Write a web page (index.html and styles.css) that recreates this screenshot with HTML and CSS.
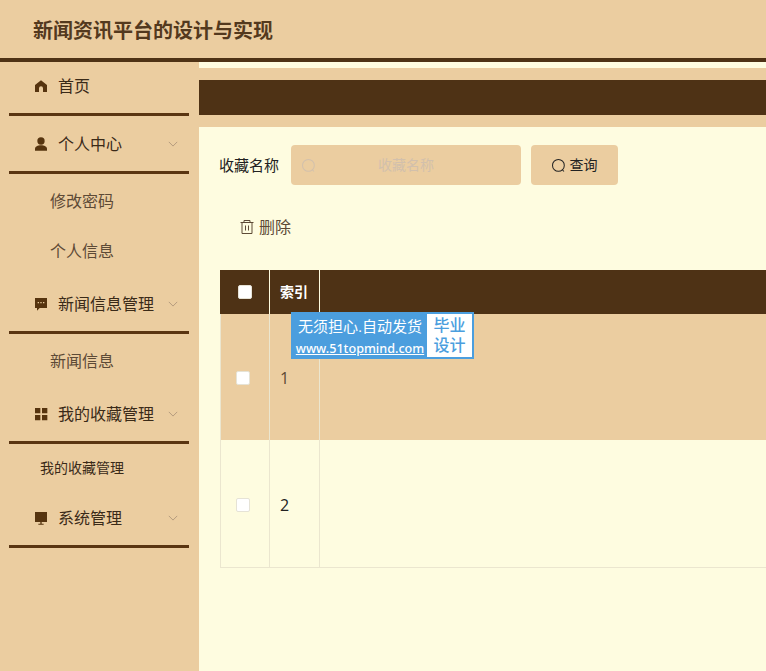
FILE: index.html
```html
<!DOCTYPE html>
<html lang="zh-CN">
<head>
    <meta charset="UTF-8">
    <meta name="viewport" content="width=device-width, initial-scale=1.0">
    <title>新闻资讯平台的设计与实现</title>
    <link rel="stylesheet" href="styles.css">
</head>
<body>
    <header class="topbar">
        <h1>新闻资讯平台的设计与实现</h1>
    </header>
    <div class="layout">
        <aside class="sidebar">
            <div class="menu-title home">
                <svg class="menu-icon" viewBox="0 0 24 24"><path d="M12 3.5 3 10.5V21h6v-5.5a3 3 0 0 1 6 0V21h6V10.5z"/></svg>
                <span>首页</span>
            </div>
            <div class="menu-title">
                <svg class="menu-icon" viewBox="0 0 24 24"><circle cx="12" cy="7.5" r="5.5"/><path d="M3 22v-2.5c0-3.5 4-5.5 9-5.5s9 2 9 5.5V22z"/></svg>
                <span>个人中心</span>
                <svg class="arrow" viewBox="0 0 12 12"><path d="M1 3.5 6 8.5 11 3.5"/></svg>
            </div>
            <div class="menu-item">修改密码</div>
            <div class="menu-item">个人信息</div>
            <div class="menu-title">
                <svg class="menu-icon" viewBox="0 0 24 24"><path d="M3 3h18v15H10l-4 4v-4H3z"/><path class="dots" d="M7 9h2v2H7zM11 9h2v2h-2zM15 9h2v2h-2z"/></svg>
                <span>新闻信息管理</span>
                <svg class="arrow" viewBox="0 0 12 12"><path d="M1 3.5 6 8.5 11 3.5"/></svg>
            </div>
            <div class="menu-item">新闻信息</div>
            <div class="menu-title">
                <svg class="menu-icon" viewBox="0 0 24 24"><path d="M3 3h8v8H3zM13.5 3h8v8h-8zM3 13.5h8v8H3zM13.5 13.5h8v8h-8z"/></svg>
                <span>我的收藏管理</span>
                <svg class="arrow" viewBox="0 0 12 12"><path d="M1 3.5 6 8.5 11 3.5"/></svg>
            </div>
            <div class="menu-item small">我的收藏管理</div>
            <div class="menu-title">
                <svg class="menu-icon" viewBox="0 0 24 24"><path d="M3 3h18v15H3zM8 20.5h8V22H8zM11 18h2v3h-2z"/></svg>
                <span>系统管理</span>
                <svg class="arrow" viewBox="0 0 12 12"><path d="M1 3.5 6 8.5 11 3.5"/></svg>
            </div>
        </aside>
        <main class="content">
            <div class="strip"></div>
            <div class="crumb-bar"></div>
            <section class="panel">
                <div class="search-row">
                    <label>收藏名称</label>
                    <div class="search-input">
                        <svg class="search-icon" viewBox="1.2 1.2 12.8 12.8"><circle cx="7.5" cy="7.5" r="5.8"/><path d="M11.5 12 13 13.5"/></svg>
                        <span>收藏名称</span>
                    </div>
                    <button class="search-btn">
                        <svg class="search-icon" viewBox="1.2 1.2 12.8 12.8"><circle cx="7.5" cy="7.5" r="5.8"/><path d="M11.5 12 13 13.5"/></svg>
                        <span>查询</span>
                    </button>
                </div>
                <div class="actions">
                    <svg class="trash" viewBox="1 1 14 14"><path d="M1.5 3.5h13M5 3.5V1.5h6v2M3 3.5v11h10v-11M6.5 6.5v5M9.5 6.5v5"/></svg>
                    <span>删除</span>
                </div>
                <div class="table">
                    <div class="row head">
                        <div class="cell check"><i class="box"></i></div>
                        <div class="cell index">索引</div>
                        <div class="cell fill"></div>
                    </div>
                    <div class="row odd">
                        <div class="cell check"><i class="box"></i></div>
                        <div class="cell index">1</div>
                        <div class="cell fill"></div>
                    </div>
                    <div class="row even">
                        <div class="cell check"><i class="box"></i></div>
                        <div class="cell index">2</div>
                        <div class="cell fill"></div>
                    </div>
                </div>
                <div class="watermark">
                    <div class="wm-text">
                        <div>无须担心.自动发货</div>
                        <a>www.51topmind.com</a>
                    </div>
                    <div class="wm-tag">毕业<br>设计</div>
                </div>
            </section>
        </main>
    </div>
</body>
</html>
```

FILE: styles.css
```css
html, body {
    margin: 0;
    height: 100%;
    overflow: hidden;
}
body {
    font-family: "Noto Sans CJK SC", "Noto Sans", sans-serif;
    background: #fefce0;
    color: #333;
}
.topbar {
    height: 58px;
    background: #ebcda0;
    border-bottom: 4px solid #4e3215;
    display: flex;
    align-items: center;
    padding-left: 33px;
}
.topbar h1 {
    margin: 0;
    font-size: 20px;
    font-weight: bold;
    color: #53391e;
}
.layout {
    display: flex;
    height: 609px;
}
.sidebar {
    width: 199px;
    flex: none;
    background: #ebcda0;
}
.menu-title {
    height: 58px;
    box-sizing: border-box;
    margin: 0 10px 0 9px;
    padding-left: 24px;
    display: flex;
    align-items: center;
    border-bottom: 3px solid #5a3511;
    font-size: 16px;
    color: #3a2a18;
}
.menu-title span {
    padding-bottom: 2px;
}
.menu-title.home {
    height: 54px;
    padding-bottom: 3px;
}
.menu-icon {
    width: 16px;
    height: 16px;
    flex: none;
    fill: #56340f;
    margin-right: 9px;
}
.menu-icon .dots {
    fill: #ebcda0;
}
.arrow {
    width: 10px;
    height: 10px;
    margin-left: auto;
    margin-right: 11px;
    fill: none;
    stroke: #a99178;
    stroke-width: 1;
}
.menu-item {
    height: 50px;
    line-height: 48px;
    margin-top: 2px;
    margin-bottom: -2px;
    padding-left: 50px;
    font-size: 16px;
    color: #5d4a36;
}
.menu-item + .menu-title {
    margin-top: 2px;
}
.menu-item.small {
    height: 46px;
    line-height: 46px;
    margin: 0;
    padding-left: 40px;
    font-size: 14px;
    color: #3a2a18;
}
.menu-item.small + .menu-title {
    margin-top: 0;
}
.content {
    flex: 1;
    min-width: 0;
    display: flex;
    flex-direction: column;
    background: #ebcda0;
}
.strip {
    height: 6px;
    background: #fefce0;
}
.crumb-bar {
    height: 35px;
    margin-top: 12px;
    background: #4e3215;
}
.panel {
    position: relative;
    flex: 1;
    margin-top: 12px;
    padding: 18px 0 0 20px;
    background: #fefce0;
}
.search-row {
    display: flex;
    align-items: center;
    height: 40px;
    font-size: 15px;
    color: #222;
}
.search-row label {
    margin-right: 12px;
    padding-bottom: 2px;
}
.search-input {
    width: 230px;
    height: 40px;
    border-radius: 4px;
    background: #ebcda0;
    display: flex;
    align-items: center;
    padding-left: 11px;
    box-sizing: border-box;
    font-size: 14px;
    color: #d2c0ac;
}
.search-input span {
    margin-left: 63px;
    padding-bottom: 2px;
}
.search-icon {
    width: 13px;
    height: 13px;
    fill: none;
    stroke: currentColor;
    stroke-width: 1;
}
.search-btn {
    margin-left: 10px;
    width: 87px;
    height: 40px;
    border: none;
    border-radius: 4px;
    background: #ebcda0;
    color: #222;
    font: inherit;
    font-size: 14px;
    display: flex;
    align-items: center;
    justify-content: center;
    gap: 5px;
}
.search-btn span {
    padding-bottom: 2px;
}
.actions {
    display: flex;
    align-items: center;
    gap: 5px;
    height: 40px;
    margin-top: 22px;
    padding-left: 21px;
    font-size: 16px;
    color: #5d4a36;
}
.actions span {
    padding-bottom: 2px;
}
.trash {
    width: 14px;
    height: 14px;
    fill: none;
    stroke: #5d4a36;
    stroke-width: 1;
}
.table {
    margin: 23px 0 0 1px;
    border-bottom: 1px solid #ebe6cf;
}
.row {
    display: flex;
    height: 126px;
    font-family: "Open Sans", "Noto Sans CJK SC", sans-serif;
    font-size: 16px;
}
.row .cell {
    padding-top: 2px;
}
.row.head {
    height: 44px;
    background: #4e3215;
    color: #fff;
    font-family: "Noto Sans CJK SC", sans-serif;
    font-weight: bold;
    font-size: 14px;
}
.row.odd {
    background: #ebcda0;
    color: #5d4a36;
}
.row.even {
    height: 127px;
    color: #222;
}
.cell {
    display: flex;
    align-items: center;
    box-sizing: border-box;
    border-right: 1px solid #ebe6cf;
}
.cell.check {
    width: 50px;
    padding-left: 15px;
    border-left: 1px solid #ebe6cf;
}
.row.head .cell {
    padding-top: 0;
    border-color: #fefce0;
}
.row.head .cell.check {
    padding-left: 18px;
    border-left: none;
}
.row.head .cell.index {
    padding-bottom: 2px;
}
.cell.index {
    width: 50px;
    padding-left: 10px;
}
.cell.fill {
    flex: 1;
    border-right: none;
}
.box {
    width: 14px;
    height: 14px;
    box-sizing: border-box;
    border-radius: 2px;
    background: #fff;
    border: 1px solid #e6e3d6;
}
.watermark {
    position: absolute;
    left: 92px;
    top: 185px;
    width: 183px;
    height: 47px;
    box-sizing: border-box;
    background: #4b9ede;
    border: 2px solid #4b9ede;
    display: flex;
    color: #fff;
    font-family: "Liberation Sans", "Noto Sans CJK SC", sans-serif;
}
.wm-text {
    flex: 1;
    padding-top: 2px;
    font-size: 15px;
    line-height: 21px;
    text-align: center;
}
.wm-text a {
    display: block;
    margin-top: 2px;
    font-family: "Noto Sans", sans-serif;
    font-size: 12.6px;
    font-weight: 500;
    line-height: 20px;
    text-decoration: underline;
    white-space: nowrap;
}
.wm-tag {
    width: 45px;
    background: #fff;
    color: #4b9ede;
    font-size: 16px;
    font-weight: 500;
    line-height: 20px;
    text-align: center;
    padding-top: 2px;
}
```
